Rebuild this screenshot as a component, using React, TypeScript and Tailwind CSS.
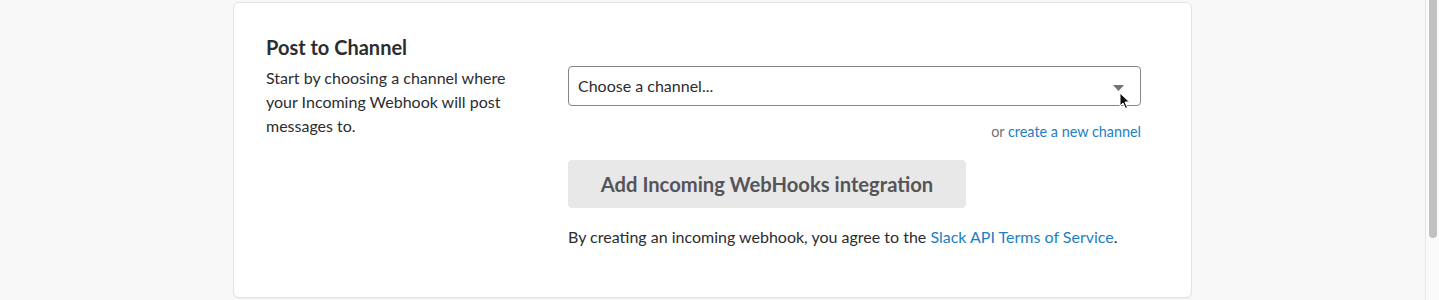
export default function App() {
  return (
    <div className="flex h-[300px] w-full overflow-hidden bg-[#f8f8f8] font-['Lato',sans-serif] text-[#2c2d30]">
      <div className="flex flex-1 justify-center pt-[2px]">
        <div className="relative h-[296px] w-[959px] rounded-[6px] border border-[#e3e3e3] bg-white px-[32px] pt-[32px] shadow-[0_1px_1px_rgba(0,0,0,0.04)]">
          <h2 className="text-[20px] leading-[24px] font-bold text-[#2c2d30]">Post to Channel</h2>
          <div className="mt-[7px] grid grid-cols-[270px_1fr] gap-[32px]">
            <p className="text-[16px] leading-[24px]">
              Start by choosing a channel where your Incoming Webhook will post messages to.
            </p>
            <div className="flex w-[573px] flex-col">
              <div className="relative flex h-[40px] items-center rounded-[4px] border border-[#868686] pl-[9px] text-[16px]">
                <span>Choose a channel...</span>
                <svg className="absolute right-[16px] top-[18px]" width="11" height="6" viewBox="0 0 11 6">
                  <path d="M0 0h11L5.5 6z" fill="#717274" />
                </svg>
                <svg className="absolute left-[550px] top-[25px]" width="12" height="18" viewBox="0 0 12 18">
                  <path d="M1 1v13l3-3 2.5 5.5 2-1L6 10h4.5z" fill="#111" stroke="#fff" strokeWidth="1" />
                </svg>
              </div>
              <div className="mt-[16px] text-right text-[14.4px] leading-[20px]">
                <span className="text-[#717274]">or </span>
                <a className="text-[#1d7ec4]">create a new channel</a>
              </div>
              <button className="mt-[18px] h-[48px] w-[398px] rounded-[4px] bg-[#e8e8e8] text-[20.2px] font-bold text-[#555459]">
                Add Incoming WebHooks integration
              </button>
              <p className="mt-[17px] text-[16px] leading-[24px]">
                By creating an incoming webhook, you agree to the{" "}
                <a className="text-[#1d7ec4]">Slack API Terms of Service</a>.
              </p>
            </div>
          </div>
        </div>
      </div>
      <div className="flex w-[14px] shrink-0 justify-center border-l border-[#e6e6e6] bg-[#fafafa]">
        <div className="h-[238px] w-[8px] rounded-b-[4px] bg-[#c1c1c1]" />
      </div>
    </div>
  );
}
